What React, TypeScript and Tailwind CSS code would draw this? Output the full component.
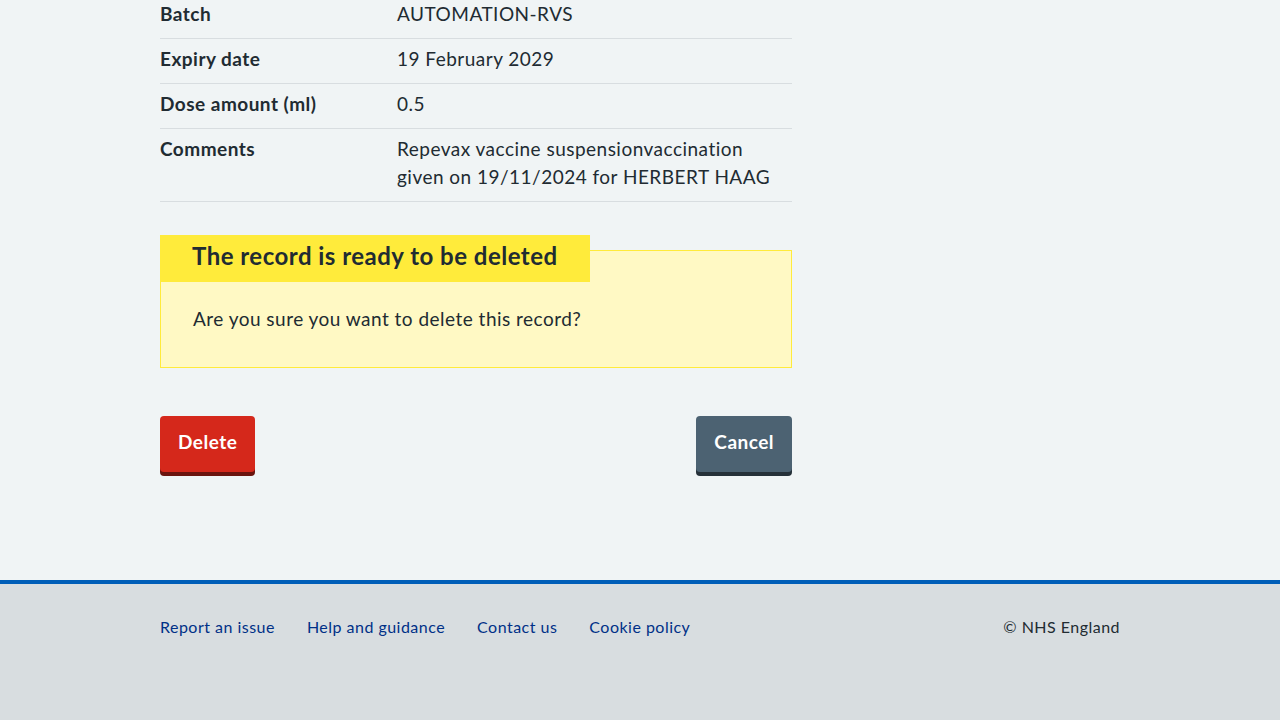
import React from 'react';

const rows: { label: string; value: React.ReactNode }[] = [
  { label: 'Batch', value: 'AUTOMATION-RVS' },
  { label: 'Expiry date', value: '19 February 2029' },
  { label: 'Dose amount (ml)', value: '0.5' },
  {
    label: 'Comments',
    value: (
      <>
        Repevax vaccine suspensionvaccination
        <br />
        given on 19/11/2024 for HERBERT HAAG
      </>
    ),
  },
];

const footerLinks = ['Report an issue', 'Help and guidance', 'Contact us', 'Cookie policy'];

export default function App() {
  return (
    <div
      className="min-h-screen flex flex-col bg-[#f0f4f5] text-[#212b32] tracking-[0.03em]"
      style={{ fontFamily: 'Lato, "Noto Sans", Arial, sans-serif' }}
    >
      <main className="flex-1 px-[160px] pb-[104px]">
        <div className="w-[632px] -mt-[6px]">
          <dl>
            {rows.map((row) => (
              <div
                key={row.label}
                className="flex border-b border-[#d8dde0] pt-[6px] pb-[10px] text-[19px] leading-[28px]"
              >
                <dt className="w-[237px] shrink-0 font-bold">{row.label}</dt>
                <dd>{row.value}</dd>
              </div>
            ))}
          </dl>

          <div className="mt-[48px] bg-[#fff9c4] border border-[#ffeb3b] pb-[34px]">
            <h3 className="-mt-[16px] -ml-px w-fit bg-[#ffeb3b] px-8 pt-[5px] pb-[11px] text-[24px] leading-[31px] font-bold">
              The record is ready to be deleted
            </h3>
            <p className="mt-[23px] px-8 text-[19px] leading-[28px]">
              Are you sure you want to delete this record?
            </p>
          </div>

          <div className="mt-[48px] flex justify-between">
            <button
              type="button"
              className="h-[56px] px-[18px] pb-[4px] rounded-[4px] bg-[#d5281b] text-white text-[19px] font-bold shadow-[0_4px_0_#6b140e]"
            >
              Delete
            </button>
            <button
              type="button"
              className="h-[56px] px-[18px] pb-[4px] rounded-[4px] bg-[#4c6272] text-white text-[19px] font-bold shadow-[0_4px_0_#263139]"
            >
              Cancel
            </button>
          </div>
        </div>
      </main>

      <footer className="border-t-4 border-[#005eb8] bg-[#d8dde0] h-[140px]">
        <div className="px-[160px] pt-[31px] flex justify-between text-[16px] leading-[24px]">
          <ul className="flex gap-8">
            {footerLinks.map((link) => (
              <li key={link}>
                <a href="#" className="text-[#003087]">
                  {link}
                </a>
              </li>
            ))}
          </ul>
          <p>© NHS England</p>
        </div>
      </footer>
    </div>
  );
}
